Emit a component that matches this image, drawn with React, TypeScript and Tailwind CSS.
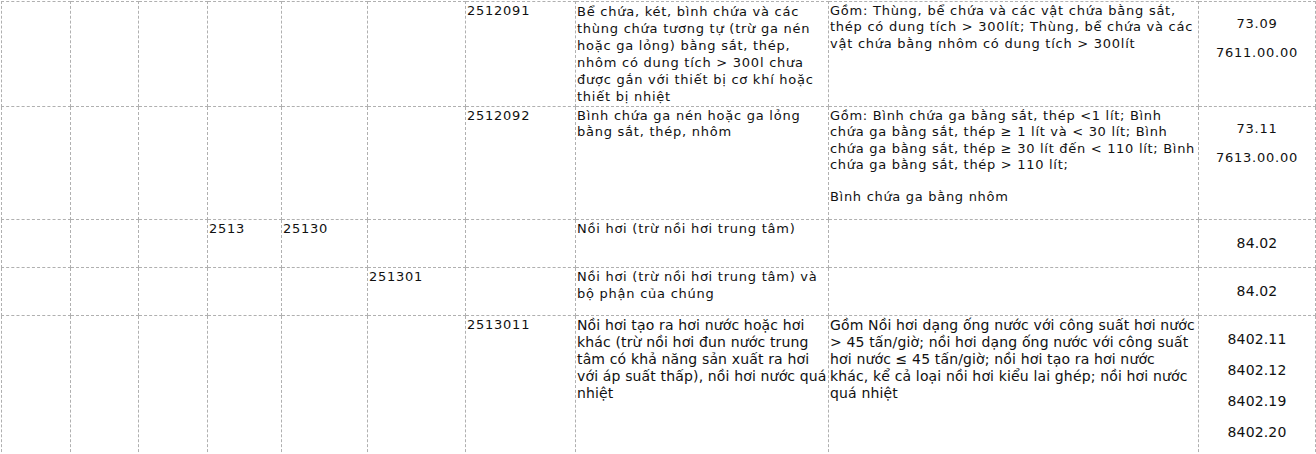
const td = "border border-dashed border-[#b0b0b0] p-[1px] align-top";
const verdana = "font-['DejaVu_Sans',Verdana,sans-serif] text-[13px] leading-[16.3px] tracking-[0.75px]";
const tahoma = "font-['DejaVu_Sans',Tahoma,sans-serif] text-[14px] leading-[17px] tracking-[0.15px]";

function Codes({ items, big }: { items: string[]; big?: boolean }) {
  return (
    <div className={big ? `${tahoma} leading-[16.5px]` : verdana}>
      {items.map((c) => (
        <p key={c} className={big ? "my-[14px] text-center" : "my-[13px] text-center"}>
          {c}
        </p>
      ))}
    </div>
  );
}

export default function App() {
  return (
    <div className="bg-white w-[1316px] h-[454px] overflow-hidden pt-[1px] pl-[1px] text-[#111]">
      <table className={`border-collapse table-fixed w-[1314px] ${verdana}`}>
        <colgroup>
          <col className="w-[69px]" />
          <col className="w-[68px]" />
          <col className="w-[69px]" />
          <col className="w-[74px]" />
          <col className="w-[86px]" />
          <col className="w-[98px]" />
          <col className="w-[110px]" />
          <col className="w-[253px]" />
          <col className="w-[370px]" />
          <col className="w-[117px]" />
        </colgroup>
        <tbody>
          {/* 2512091 */}
          <tr>
            <td className={td}></td>
            <td className={td}></td>
            <td className={td}></td>
            <td className={td}></td>
            <td className={td}></td>
            <td className={td}></td>
            <td className={td}>2512091</td>
            <td className={`${td} leading-[17px]`}>
              Bể chứa, két, bình chứa và các thùng chứa tương tự (trừ ga nén hoặc ga lỏng) bằng sắt, thép, nhôm có dung tích &gt; 300l chưa được gắn với thiết bị cơ khí hoặc thiết bị nhiệt
            </td>
            <td className={td}>
              Gồm: Thùng, bể chứa và các vật chứa bằng sắt, thép có dung tích &gt; 300lít; Thùng, bể chứa và các vật chứa bằng nhôm có dung tích &gt; 300lít
            </td>
            <td className={td}>
              <Codes items={["73.09", "7611.00.00"]} />
            </td>
          </tr>

          {/* 2512092 */}
          <tr>
            <td className={td}></td>
            <td className={td}></td>
            <td className={td}></td>
            <td className={td}></td>
            <td className={td}></td>
            <td className={td}></td>
            <td className={td}>2512092</td>
            <td className={td}>Bình chứa ga nén hoặc ga lỏng bằng sắt, thép, nhôm</td>
            <td className={`${td} tracking-[0.7px]`}>
              <p>
                Gồm: Bình chứa ga bằng sắt, thép &lt;1 lít; Bình chứa ga bằng sắt, thép ≥ 1 lít và &lt; 30 lít; Bình chứa ga bằng sắt, thép ≥ 30 lít đến &lt; 110 lít; Bình chứa ga bằng sắt, thép &gt; 110 lít;
              </p>
              <p className="mt-[16px] mb-[13px]">Bình chứa ga bằng nhôm</p>
            </td>
            <td className={td}>
              <Codes items={["73.11", "7613.00.00"]} />
            </td>
          </tr>

          {/* 2513 */}
          <tr>
            <td className={td}></td>
            <td className={td}></td>
            <td className={td}></td>
            <td className={td}>2513</td>
            <td className={td}>25130</td>
            <td className={td}></td>
            <td className={td}></td>
            <td className={td}>Nồi hơi (trừ nồi hơi trung tâm)</td>
            <td className={td}></td>
            <td className={td}>
              <Codes items={["84.02"]} big />
            </td>
          </tr>

          {/* 251301 */}
          <tr>
            <td className={td}></td>
            <td className={td}></td>
            <td className={td}></td>
            <td className={td}></td>
            <td className={td}></td>
            <td className={td}>251301</td>
            <td className={td}></td>
            <td className={td}>Nồi hơi (trừ nồi hơi trung tâm) và bộ phận của chúng</td>
            <td className={td}></td>
            <td className={td}>
              <Codes items={["84.02"]} big />
            </td>
          </tr>

          {/* 2513011 */}
          <tr>
            <td className={td}></td>
            <td className={td}></td>
            <td className={td}></td>
            <td className={td}></td>
            <td className={td}></td>
            <td className={td}></td>
            <td className={td}>2513011</td>
            <td className={`${td} ${tahoma}`}>
              Nồi hơi tạo ra hơi nước hoặc hơi khác (trừ nồi hơi đun nước trung tâm có khả năng sản xuất ra hơi với áp suất thấp), nồi hơi nước quá nhiệt
            </td>
            <td className={`${td} ${tahoma}`}>
              Gồm Nồi hơi dạng ống nước với công suất hơi nước &gt; 45 tấn/giờ; nồi hơi dạng ống nước với công suất hơi nước ≤ 45 tấn/giờ; nồi hơi tạo ra hơi nước khác, kể cả loại nồi hơi kiểu lai ghép; nồi hơi nước quá nhiệt
            </td>
            <td className={td}>
              <Codes items={["8402.11", "8402.12", "8402.19", "8402.20"]} big />
            </td>
          </tr>
        </tbody>
      </table>
    </div>
  );
}
